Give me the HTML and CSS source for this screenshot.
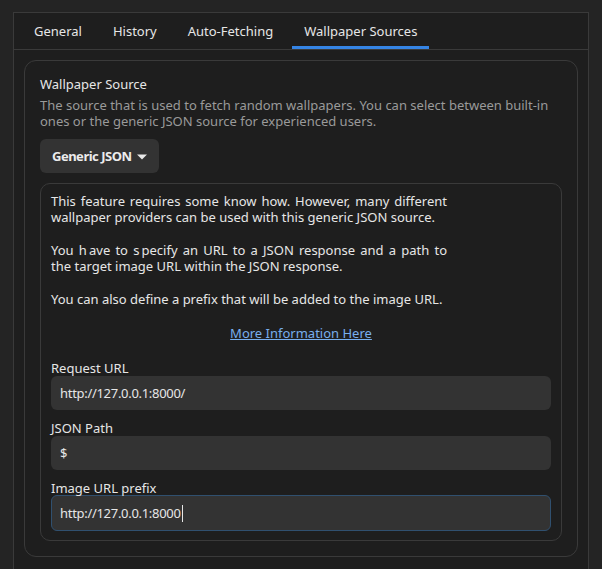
FILE: index.html
```html
<!DOCTYPE html>
<html>
<head>
<meta charset="utf-8">
<link rel="stylesheet" href="styles.css">
</head>
<body>
<div class="notebook">
  <div class="tabs">
    <div class="tab">General</div>
    <div class="tab">History</div>
    <div class="tab">Auto-Fetching</div>
    <div class="tab active">Wallpaper Sources</div>
  </div>
  <div class="page">
    <div class="group">
      <div class="title">Wallpaper Source</div>
      <div class="desc">The source that is used to fetch random wallpapers. You can select between built-in ones or the generic JSON source for experienced users.</div>
      <button class="dropdown"><span>Generic JSON</span><svg class="arrow" width="10" height="6" viewBox="0 0 10 6"><path d="M0 0.5 L10 0.5 L5 5.5 Z" fill="#e8e8e8"/></svg></button>
      <div class="inner">
        <div class="info">
          <p><span class="jl">This feature requires some know how. However, many different</span><span class="ln">wallpaper providers can be used with this generic JSON source.</span></p>
          <p><span class="jl">You h&#8201;ave to s&#8201;pecify an URL to a JSON response and a path to</span><span class="ln">the target image URL within the JSON response.</span></p>
          <p><span class="ln">You can also define a prefix that will be added to the image URL.</span></p>
        </div>
        <div class="linkrow"><a class="link" href="#">More Information Here</a></div>
        <div class="field">
          <div class="label">Request URL</div>
          <div class="entry">http://127.0.0.1:8000/</div>
        </div>
        <div class="field">
          <div class="label">JSON Path</div>
          <div class="entry">$</div>
        </div>
        <div class="field">
          <div class="label">Image URL prefix</div>
          <div class="entry focused">http://127.0.0.1:8000<span class="caret"></span></div>
        </div>
      </div>
    </div>
  </div>
</div>
</body>
</html>
```

FILE: styles.css
```css
html, body {
  margin: 0;
  padding: 0;
  background: #242424;
  height: 100%;
  overflow: hidden;
}
body {
  padding: 12px 13px 0 13px;
  font-family: "Noto Sans", "DejaVu Sans", sans-serif;
  font-size: 13px;
  color: #e6e6e6;
  box-sizing: border-box;
}
.notebook {
  width: 576px;
  box-sizing: border-box;
  border: 1px solid #3a3a3a;
  border-bottom: none;
  background: #1e1e1e;
  height: 557px;
  overflow: hidden;
}
.tabs {
  display: flex;
  height: 36px;
  border-bottom: 1px solid #3a3a3a;
  padding-left: 8px;
  gap: 7px;
}
.tab {
  padding: 3px 12px 0 12px;
  display: flex;
  align-items: center;
  box-sizing: border-box;
  height: 36px;
  color: #e6e6e6;
  border-bottom: 3px solid transparent;
  white-space: nowrap;
}
.tab.active {
  border-bottom-color: #3584e4;
}
.page {
  padding: 10px;
}
.group {
  border: 1px solid #3a3a3a;
  border-radius: 12px;
  padding: 14px 15px 15px 15px;
}
.title {
  line-height: 18px;
  color: #e6e6e6;
}
.desc {
  color: #9a9a9a;
  line-height: 16px;
  margin-top: 4px;
  width: 520px;
}
.dropdown {
  margin-top: 10px;
  height: 34px;
  border: none;
  border-radius: 6px;
  background: #333333;
  color: #ececec;
  font-family: inherit;
  font-size: 13px;
  font-weight: bold;
  letter-spacing: -0.5px;
  display: flex;
  align-items: center;
  padding: 0 12px;
  gap: 5px;
  white-space: nowrap;
}
.arrow { flex-shrink: 0; margin-top: 1px; }
.inner {
  margin-top: 10px;
  border: 1px solid #3a3a3a;
  border-radius: 10px;
  padding: 9px 10px 9px 10px;
}
.info p {
  margin: 0 0 16.3px 0;
  line-height: 16.3px;
}
.info p:last-child { margin-bottom: 0; }
.jl, .ln { display: block; width: 396px; white-space: nowrap; }
.jl { text-align: justify; text-align-last: justify; white-space: normal; }
.linkrow {
  text-align: center;
  margin-top: 17px;
  line-height: 18px;
}
.link {
  color: #78aeed;
  text-decoration: underline;
}
.field { margin-top: 10px; }
.linkrow + .field { margin-top: 18px; }
.label {
  line-height: 16px;
  margin-bottom: 0;
}
.entry {
  height: 34px;
  width: 500px;
  box-sizing: border-box;
  background: #333333;
  border-radius: 6px;
  padding: 0 9px;
  display: flex;
  align-items: center;
  color: #e6e6e6;
  letter-spacing: -0.3px;
}
.entry.focused {
  height: 36px;
  border: 1px solid #30506f;
  padding-left: 8px;
  margin-top: -1px;
}
.caret {
  display: inline-block;
  width: 1px;
  height: 17px;
  background: #e6e6e6;
  margin-left: 1px;
}
```
